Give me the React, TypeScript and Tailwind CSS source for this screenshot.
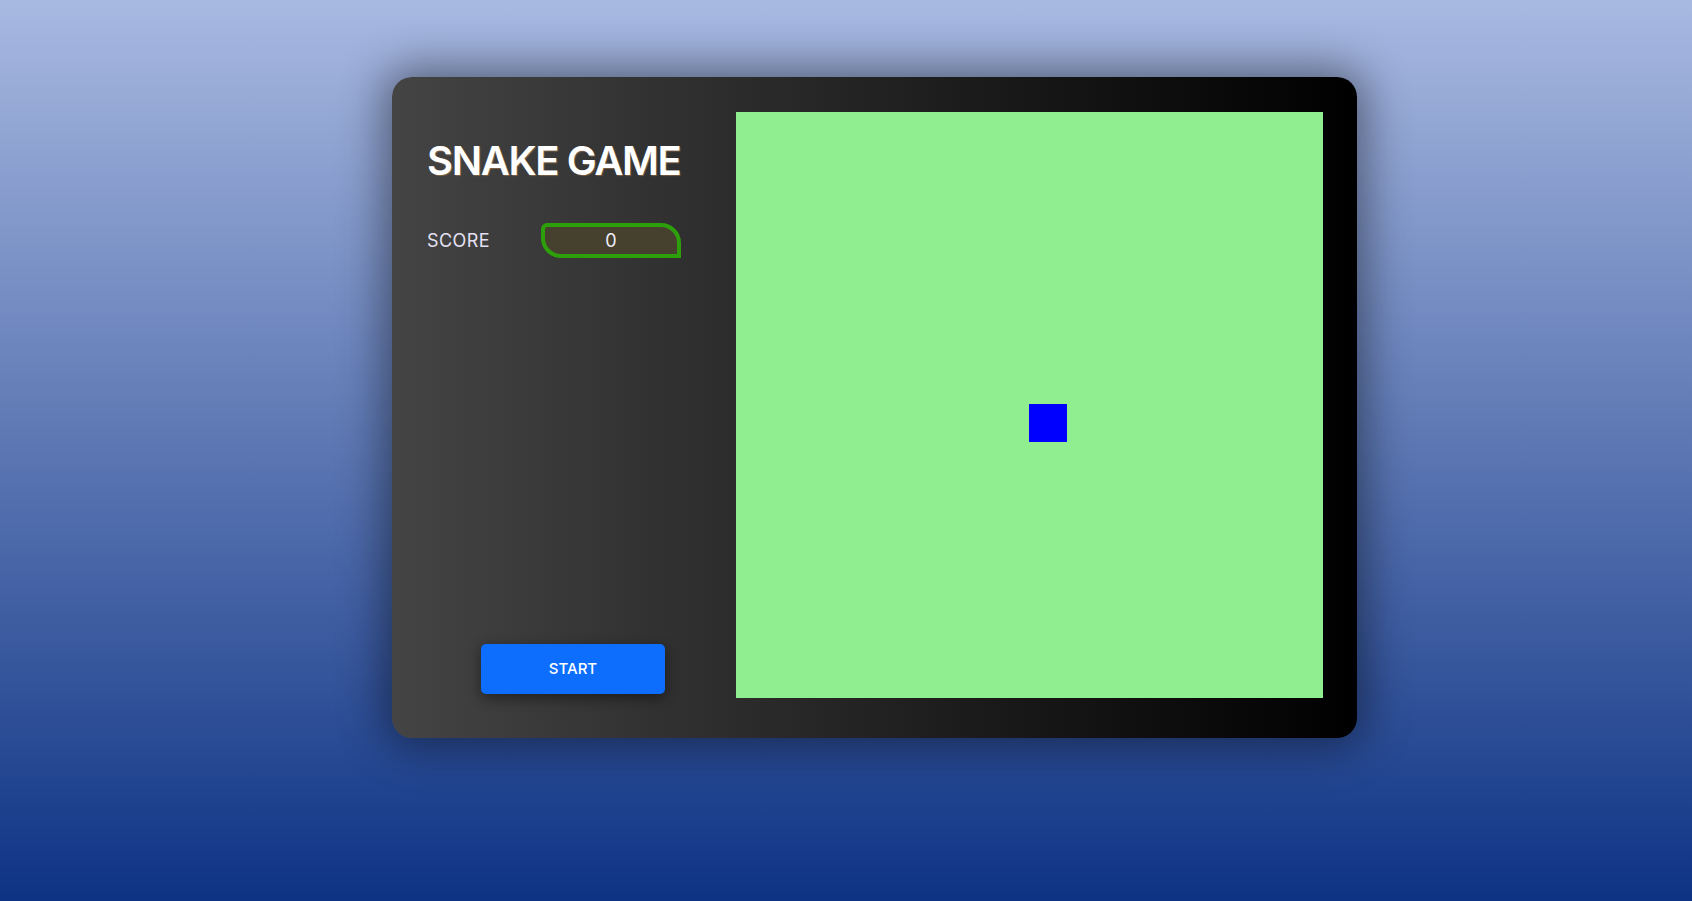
import React from "react";

export default function App() {
  return (
    <div
      className="w-[1692px] h-[901px] overflow-hidden bg-[linear-gradient(to_bottom,#a8b9e1,#0e3384)] pt-[77px] pl-[392px]"
      style={{ fontFamily: "Inter, 'Noto Sans', sans-serif" }}
    >
      <div className="w-[965px] h-[661px] rounded-[20px] bg-[linear-gradient(to_right,#444444,#000000)] shadow-[0_0_45px_8px_rgba(0,0,0,0.45)] flex p-[35px] pb-[39px] pr-[34px]">
        <div className="w-[292px] flex flex-col">
          <h1 className="mt-[25px] text-[40px] leading-[48px] font-semibold text-white tracking-[-1.35px] [text-shadow:1px_1px_1px_rgba(255,170,90,0.35)]">
            SNAKE GAME
          </h1>
          <div className="mt-[38px] flex items-center">
            <span className="text-[18px] text-[#e4e0f2] w-[114px] tracking-[0.4px]">SCORE</span>
            <div className="w-[140px] h-[35px] border-[4px] border-[#2c9f0b] bg-[#46412f] rounded-tl-[6px] rounded-tr-[20px] rounded-bl-[20px] rounded-br-none flex items-center justify-center text-[18px] text-[#f0eef8]">
              0
            </div>
          </div>
          <div className="flex-1" />
          <div className="flex justify-center mb-[5px]">
            <button className="w-[184px] h-[50px] rounded-[5px] bg-[#0d6efd] text-white text-[15px] font-medium shadow-[0_4px_14px_rgba(0,0,0,0.45)]">
              START
            </button>
          </div>
        </div>
        <div className="ml-[17px] relative w-[587px] h-[586px] bg-[#90ee90]">
          <div className="absolute left-[293px] top-[292px] w-[38px] h-[38px] bg-[#0000ff]" />
        </div>
      </div>
    </div>
  );
}
